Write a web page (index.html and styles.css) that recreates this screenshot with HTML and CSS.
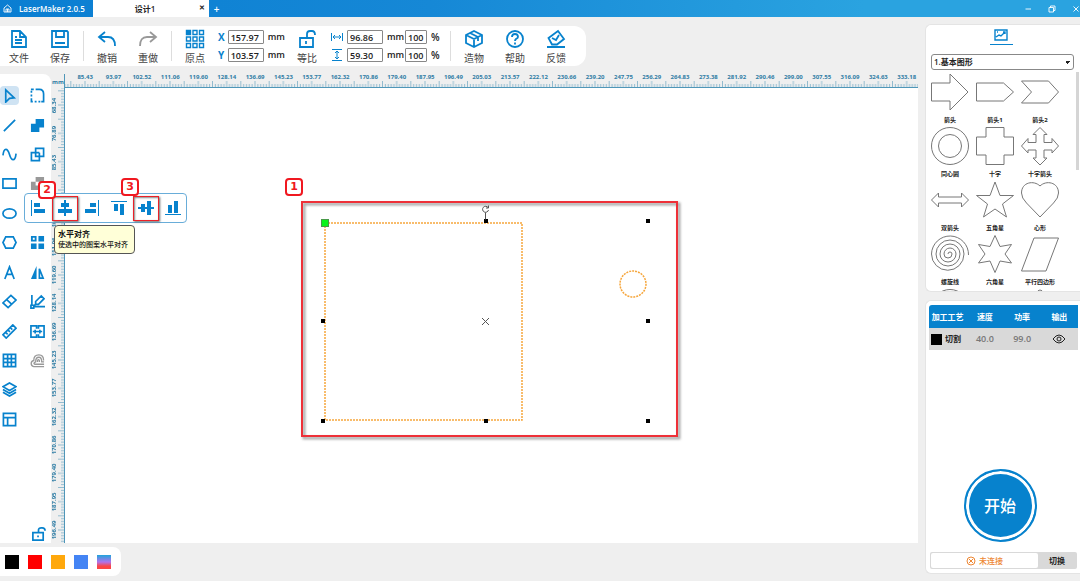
FILE: index.html
```html
<!DOCTYPE html>
<html lang="zh-CN">
<head>
<meta charset="utf-8">
<title>LaserMaker 2.0.5</title>
<link rel="stylesheet" href="styles.css">
</head>
<body>
<header class="titlebar">
  <div class="brand">
    <svg class="ic" width="9" height="9" viewBox="0 0 18 18"><path d="M2 8 9 2l7 6v8H2zM6 16v-6h6v6M9 10v6"/></svg>
    <span>LaserMaker 2.0.5</span>
  </div>
  <div class="tab"><span>设计1</span><button class="tab-close" aria-label="关闭标签">✕</button></div>
  <button class="tab-add" aria-label="新建标签">+</button>
  <div class="window-buttons">
    <button aria-label="最小化"><svg class="ic" width="8" height="8" viewBox="0 0 16 16"><path d="M3 8h11"/></svg></button>
    <button aria-label="还原"><svg class="ic" width="8" height="8" viewBox="0 0 16 16"><path d="M2 5h9v9H2zM5 5V2h9v9h-3"/></svg></button>
    <button aria-label="关闭"><svg class="ic" width="8" height="8" viewBox="0 0 16 16"><path d="m3 3 10 10M13 3 3 13"/></svg></button>
  </div>
</header>

<div class="app">
  <div class="left">
    <nav class="toolbar">
      <button class="tool"><svg class="ic" width="20" height="20" viewBox="0 0 20 20"><path d="M3 2h8l6 6v10H3zM11 2v6h6M6 11h7M6 14h7M6 8h2"/></svg><span>文件</span></button>
      <button class="tool"><svg class="ic" width="20" height="20" viewBox="0 0 20 20"><path d="M2 2h15l1 1v15H2zM6 2v6h8V2M5 14h10"/></svg><span>保存</span></button>
      <i class="sep"></i>
      <button class="tool"><svg class="ic" width="20" height="20" viewBox="0 0 20 20"><path d="M8 3 2 8l6 5M2 8h9q7 0 7 9"/></svg><span>撤销</span></button>
      <button class="tool"><svg class="ic gray" width="20" height="20" viewBox="0 0 20 20"><path d="m12 3 6 5-6 5M18 8H9q-7 0-7 9"/></svg><span>重做</span></button>
      <i class="sep"></i>
      <button class="tool"><svg class="ic fine" width="20" height="20" viewBox="0 0 20 20"><path fill="currentColor" d="M1.500 1.500h4v4h-4z"/><path d="M8 1.500h4v4H8zM14.500 1.500h4v4h-4zM1.500 8h4v4h-4zM8 8h4v4H8zM14.500 8h4v4h-4zM1.500 14.500h4v4h-4zM8 14.500h4v4H8zM14.500 14.500h4v4h-4z"/></svg><span>原点</span></button>
      <div class="fields">
        <div class="field"><label class="axis" for="px">X</label><input id="px" class="num" value="157.97"><span class="unit">mm</span></div>
        <div class="field"><label class="axis" for="py">Y</label><input id="py" class="num" value="103.57"><span class="unit">mm</span></div>
      </div>
      <button class="tool"><svg class="ic" width="20" height="20" viewBox="0 0 20 20"><path d="M3 9h13v9H3zM10 9V5q0-3 3-3h2q3 0 3 4M9 12v3"/></svg><span>等比</span></button>
      <div class="fields size">
        <div class="field"><label class="dim" for="w" aria-label="宽"><svg class="ic thin" width="12" height="12" viewBox="0 0 12 12"><path d="M.5 2v8M11.500 2v8M2 6h8M4 4 2 6l2 2M8 4l2 2-2 2"/></svg></label><input id="w" class="num" value="96.86"><span class="unit">mm</span><input class="num pct" aria-label="宽度百分比" value="100"><span class="percent">%</span></div>
        <div class="field"><label class="dim" for="h" aria-label="高"><svg class="ic thin" width="12" height="12" viewBox="0 0 12 12"><path d="M1 .5h10M1 11.500h10M6 2v8M4 4l2-2 2 2M4 8l2 2 2-2"/></svg></label><input id="h" class="num" value="59.30"><span class="unit">mm</span><input class="num pct" aria-label="高度百分比" value="100"><span class="percent">%</span></div>
      </div>
      <i class="sep"></i>
      <button class="tool"><svg class="ic" width="20" height="20" viewBox="0 0 20 20"><path d="m10 2 8 4v8l-8 4-8-4V6zM2 6l8 4 8-4M10 10v8M6 4l8 4v4"/></svg><span>造物</span></button>
      <button class="tool"><svg class="ic" width="20" height="20" viewBox="0 0 20 20"><circle cx="10" cy="10" r="8"/><path d="M7 8q0-3 3-3t3 3q0 1-2 2-1 1-1 2M10 13.500v2"/></svg><span>帮助</span></button>
      <button class="tool"><svg class="ic" width="20" height="20" viewBox="0 0 20 20"><path d="M1 18h18M6 15.500 2.500 9 12 2l6 8-7 5.500zM6 9l4 2 3-5"/></svg><span>反馈</span></button>
    </nav>

    <main class="workspace">
      <aside class="tools">
        <div class="tool-grid">
          <button class="t on" aria-label="选择"><svg class="ic" viewBox="0 0 16 16"><path d="m4 2 9 8.500-5 .5-4 4z"/></svg></button>
          <button class="t" aria-label="圆角"><svg class="ic" viewBox="0 0 16 16"><path d="M6 1.500h4q4.500 0 4.500 5v8H12M1 1.500h3M1.500 3v2M1.500 7v2M1.500 11v3.500H3M5 14.500h2M9 14.500h2"/></svg></button>
          <button class="t" aria-label="直线"><svg class="ic" viewBox="0 0 16 16"><path d="M2 14 14 2"/></svg></button>
          <button class="t" aria-label="并集"><svg class="ic solid" viewBox="0 0 16 16"><path d="M6 1h9v9h-5v5H1V6h5z"/></svg></button>
          <button class="t" aria-label="曲线"><svg class="ic" viewBox="0 0 16 16"><path d="M1 9C2 0 6 1 8 8s6 8 7-1"/></svg></button>
          <button class="t" aria-label="差集"><svg class="ic" viewBox="0 0 16 16"><path d="M6 1.500h8.500V10H6zM10 6v8.500H1.500V6H10"/></svg></button>
          <button class="t" aria-label="矩形"><svg class="ic" viewBox="0 0 16 16"><path d="M1 3h14v10H1z"/></svg></button>
          <button class="t" aria-label="交集"><svg class="ic solid gray" viewBox="0 0 16 16"><path fill-rule="evenodd" d="M6 1h9v9h-5v5H1V6h5zm0 5h4v4H6z"/></svg></button>
          <button class="t" aria-label="椭圆"><svg class="ic" viewBox="0 0 16 16"><ellipse cx="8" cy="8" rx="7" ry="5"/></svg></button>
          <button class="t" aria-label="对齐"><svg class="ic solid" viewBox="0 0 16 16"><path d="M1 1h2v14H1zM5 3h5v4H5zM5 9h9v4H5z"/></svg></button>
          <button class="t" aria-label="多边形"><svg class="ic" viewBox="0 0 16 16"><path d="M4 2h8l3 6-3 6H4L1 8z"/></svg></button>
          <button class="t" aria-label="阵列"><svg class="ic solid" viewBox="0 0 16 16"><path fill-rule="evenodd" d="M1 1h6v6H1zm2 2v2h2V3zM9 1h6v6H9zM1 9h6v6H1zM9 9h6v6H9z"/></svg></button>
          <button class="t" aria-label="文字"><svg class="ic" viewBox="0 0 16 16"><path d="M3 15 8 2l5 13M5 10h6"/></svg></button>
          <button class="t" aria-label="镜像"><svg class="ic" viewBox="0 0 16 16"><path d="M10 4v10h4z"/><path class="face" d="M7 1v14H1z"/></svg></button>
          <button class="t" aria-label="橡皮擦"><svg class="ic" viewBox="0 0 16 16"><path d="M9.500 1.500 15 6.500l-8.500 8L1 9.500zM5 6l5.500 5"/></svg></button>
          <button class="t" aria-label="编辑节点"><svg class="ic" viewBox="0 0 16 16"><path d="M2 1v11M4 13.500h12M1 12h3v3H1zM6 11V8l6-6 3 3-6 6zM4 13l3-3"/></svg></button>
          <button class="t" aria-label="测量"><svg class="ic" viewBox="0 0 16 16"><path d="m11.500 1 3.500 3.500L4.500 15 1 11.500zM9 4l2 2M6.500 6.500l2 2M4 9l2 2"/></svg></button>
          <button class="t" aria-label="拼接"><svg class="ic" viewBox="0 0 16 16"><path d="M7 5V2H1v12h6v-3M9 5V2h6v12H9v-3M3 8h10M5.500 6v4M10.500 6v4"/></svg></button>
          <button class="t" aria-label="网格"><svg class="ic" viewBox="0 0 16 16"><path d="M1.500 1.500h13v13h-13zM6 2v12M10 2v12M2 6h12M2 10h12"/></svg></button>
          <button class="t" aria-label="偏移"><svg class="ic fine gray" viewBox="0 0 16 16"><path d="M15 14.500H4A3.300 3.300 0 0 1 4 8Q4 2 9.500 2q5 0 5 6M15 12H5q-2-1 1-2.500Q6 4.500 9.500 4.500q3 0 3 5H15M8 9.500V8q1-2 2 0v1.500"/></svg></button>
          <button class="t" aria-label="图层"><svg class="ic" viewBox="0 0 16 16"><path d="m8 1 7 4-7 4-7-4zM1 8l7 4 7-4M1 11l7 4 7-4"/></svg></button>
          <span></span>
          <button class="t" aria-label="布局"><svg class="ic" viewBox="0 0 16 16"><path d="M1.500 1.500h13v13h-13zM2 6h12M6 6v8"/></svg></button>
        </div>
        <button class="t lock" aria-label="锁定"><svg class="ic" viewBox="0 0 16 16"><path d="M2 7h11v8H2zM8 7V4q0-2 3-2h1q3 0 3 3M7.500 10v2"/></svg></button>
      </aside>

      <div class="board">
        <div class="corner">mm</div>
        <div class="ruler-x">
          <svg class="ticks-x" viewBox="0 0 300 7" preserveAspectRatio="none"><defs><pattern id="tx" width="10" height="7" patternUnits="userSpaceOnUse"><path d="M1 4v3M2 4v3M3 4v3M4 4v3M6 4v3M7 4v3M8 4v3M9 4v3M5 1v6"/><path d="M0 1v6M10 1v6"/></pattern></defs><rect x="-7" width="310" height="7" fill="url(#tx)" stroke="none"/></svg>
          <span>85.43</span><span>93.97</span><span>102.52</span><span>111.06</span><span>119.60</span><span>128.14</span><span>136.69</span><span>145.23</span><span>153.77</span><span>162.32</span><span>170.86</span><span>179.40</span><span>187.95</span><span>196.49</span><span>205.03</span><span>213.57</span><span>222.12</span><span>230.66</span><span>239.20</span><span>247.75</span><span>256.29</span><span>264.83</span><span>273.38</span><span>281.92</span><span>290.46</span><span>299.00</span><span>307.55</span><span>316.09</span><span>324.63</span><span>333.18</span>
        </div>
        <div class="ruler-y">
          <svg class="ticks-y" viewBox="0 0 7 160" preserveAspectRatio="none"><defs><pattern id="ty" width="7" height="10" patternUnits="userSpaceOnUse"><path d="M4 1h3M4 2h3M4 3h3M4 4h3M4 6h3M4 7h3M4 8h3M4 9h3M1 5h6"/><path d="M1 0h6M1 10h6"/></pattern></defs><rect y="-7" width="7" height="170" fill="url(#ty)" stroke="none"/></svg>
          <span>68.34</span><span>76.89</span><span>85.43</span><span>93.97</span><span>102.52</span><span>111.06</span><span>119.60</span><span>128.14</span><span>136.69</span><span>145.23</span><span>153.77</span><span>162.32</span><span>170.86</span><span>179.40</span><span>187.95</span><span>196.49</span>
        </div>
        <div class="canvas">
          <svg class="drawing" width="853" height="455" viewBox="65 88 853 455">
            <rect class="frame-shadow" x="304" y="204" width="375" height="234"/>
            <rect class="frame" x="302" y="202" width="375" height="234"/>
            <rect class="cut" x="325" y="223" width="197" height="197"/>
            <circle class="cut" cx="633" cy="284" r="13"/>
            <path class="handle" d="M321 319h4v4h-4zM321 419h4v4h-4zM484 219h4v4h-4zM484 419h4v4h-4zM646 219h4v4h-4zM646 319h4v4h-4zM646 419h4v4h-4z"/>
            <rect class="origin" x="321.500" y="219.500" width="7" height="7"/>
            <path class="mark" d="m482 318 7 7M489 318l-7 7M485.500 212.500v7M488 207.500a3 3 0 1 0 .5 2.500M488.500 205.500v2.500h-2.500"/>
          </svg>
          <b class="badge one">1</b>
        </div>
      </div>

      <div class="align-menu">
        <button aria-label="左对齐"><svg class="ic solid" width="16" height="16" viewBox="0 0 16 16"><path d="M1 0h1v16H1zM4 3h6v4H4zM4 9h11v4H4z"/></svg></button>
        <button class="picked" aria-label="水平对齐"><svg class="ic solid" width="16" height="16" viewBox="0 0 16 16"><path d="M7 0h2v16H7zM4 3h8v4H4zM1 9h14v4H1z"/></svg><b class="badge two">2</b></button>
        <button aria-label="右对齐"><svg class="ic solid" width="16" height="16" viewBox="0 0 16 16"><path d="M14 0h1v16h-1zM6 3h6v4H6zM1 9h11v4H1z"/></svg></button>
        <button aria-label="顶对齐"><svg class="ic solid" width="16" height="16" viewBox="0 0 16 16"><path d="M0 1h16v1H0zM3 4h4v7H3zM9 4h4v11H9z"/></svg></button>
        <button class="picked" aria-label="垂直对齐"><svg class="ic solid" width="16" height="16" viewBox="0 0 16 16"><path d="M0 7h16v2H0zM3 4h4v8H3zM9 1h4v14H9z"/></svg><b class="badge three">3</b></button>
        <button aria-label="底对齐"><svg class="ic solid" width="16" height="16" viewBox="0 0 16 16"><path d="M0 14h16v1H0zM3 5h4v8H3zM9 1h4v12H9z"/></svg></button>
      </div>
      <div class="tooltip" role="tooltip"><b>水平对齐</b><span>使选中的图案水平对齐</span></div>
    </main>

    <footer class="palette">
      <button class="sw black" aria-label="黑色"></button>
      <button class="sw red" aria-label="红色"></button>
      <button class="sw orange" aria-label="橙色"></button>
      <button class="sw blue" aria-label="蓝色"></button>
      <button class="sw mix" aria-label="渐变"></button>
    </footer>
  </div>

  <div class="right">
    <section class="panel library">
      <button class="lib-tab" aria-label="图库"><svg class="ic fine" width="14" height="12" viewBox="0 0 14 12"><path d="M1 1h12v10H1zM2 8l3-2 2 1 4-4M9 3h2v2M3 3h1"/></svg></button>
      <select class="lib-select" aria-label="图形分类"><option>1.基本图形</option></select>
      <div class="shapes">
        <figure><svg viewBox="0 0 38 38"><path d="M.5 10H19V1l18 18-18 18v-9H.5z"/></svg><figcaption>箭头</figcaption></figure>
        <figure><svg viewBox="0 0 38 38"><path d="M.5 10h27l10 9-10 9H.5z"/></svg><figcaption>箭头1</figcaption></figure>
        <figure><svg viewBox="0 0 38 38"><path d="M.5 8h27l10 11-10 11H.5l10-11z"/></svg><figcaption>箭头2</figcaption></figure>
        <figure><svg viewBox="0 0 38 38"><circle cx="19" cy="19" r="18.5"/><circle cx="19" cy="19" r="11.500"/></svg><figcaption>同心圆</figcaption></figure>
        <figure><svg viewBox="0 0 38 38"><path d="M10 .5h18V10h9.500v18H28v9.500H10V28H.5V10H10z"/></svg><figcaption>十字</figcaption></figure>
        <figure><svg viewBox="0 0 38 38"><path d="m19 .5 7 7h-3v8h8v-4l6.500 7.500-6.500 7v-3h-8v8h3l-7 7-7-7h3v-8H7v3l-6.500-7L7 11.500v4h8v-8h-3z"/></svg><figcaption>十字箭头</figcaption></figure>
        <figure><svg viewBox="0 0 38 38"><path d="m.5 19 7-7v4h23v-4l7 7-7 7v-4h-23v4z"/></svg><figcaption>双箭头</figcaption></figure>
        <figure><svg viewBox="0 0 38 38"><path d="m19 1 5 13.500h13.500l-11 8.500 4 13L19 28 7.500 36l4-13L.5 14.500H14z"/></svg><figcaption>五角星</figcaption></figure>
        <figure><svg viewBox="0 0 38 38"><path d="M19 5C13-1 .5 1 .5 12q0 5 5 10L19 36l13.500-14q5-5 5-10C37.500 1 25-1 19 5z"/></svg><figcaption>心形</figcaption></figure>
        <figure><svg viewBox="0 0 38 38"><path d="M37.500 20A18.500 18.500 0 0 0 .5 19A16.200 16.200 0 0 0 33 19A14 14 0 0 0 5 19A12 12 0 0 0 29 19A10 10 0 0 0 9 19A8 8 0 0 0 25 19A6 6 0 0 0 13 19A4 4 0 0 0 21 19A2 2 0 0 0 17 19"/></svg><figcaption>螺旋线</figcaption></figure>
        <figure><svg viewBox="0 0 38 38"><path d="m19 .5 5 11 11.500-2-6.500 9.500 6.500 9-11.500-2-5 11.500-5-11.500-11.500 2 6.500-9-6.500-9.500 11.500 2z"/></svg><figcaption>六角星</figcaption></figure>
        <figure><svg viewBox="0 0 38 38"><path d="M13 3h24.500L25 36H.5z"/></svg><figcaption>平行四边形</figcaption></figure>
        <figure><svg viewBox="0 0 38 38"><circle cx="19" cy="19" r="18.500"/></svg></figure>
        <figure></figure>
        <figure><svg viewBox="0 0 38 38"><path d="M15 4q4-6 8 0v33h-8z"/></svg></figure>
      </div>
    </section>

    <section class="panel process">
      <table>
        <thead><tr><th>加工工艺</th><th>速度</th><th>功率</th><th>输出</th></tr></thead>
        <tbody><tr><td><div class="craft"><i></i>切割</div></td><td>40.0</td><td>99.0</td><td><svg class="ic eye" width="14" height="10" viewBox="0 0 14 10"><path d="M1 5q6-8 12 0-6 8-12 0z"/><circle cx="7" cy="5" r="2"/></svg></td></tr></tbody>
      </table>
      <button class="start">开始</button>
      <div class="link-bar">
        <div class="link-state"><svg class="ic" width="10" height="10" viewBox="0 0 10 10"><circle cx="5" cy="5" r="4"/><path d="m3 3 4 4M7 3 3 7"/></svg><span>未连接</span></div>
        <button class="switch">切换</button>
      </div>
    </section>
  </div>
</div>
</body>
</html>
```

FILE: styles.css
```css
* { box-sizing: border-box; }
body {
  margin: 0;
  height: 100vh;
  display: flex;
  flex-direction: column;
  overflow: hidden;
  background: #efefef;
  color: #222;
  font: 9px/12px "Open Sans", "Noto Sans CJK SC", sans-serif;
}
button { border: 0; padding: 0; margin: 0; background: none; font: inherit; color: inherit; }
.ic { display: block; flex: none; fill: none; stroke: currentColor; stroke-width: 1.8; color: #0782cd; }
.ic.thin { stroke-width: 1; }
.ic.fine { stroke-width: 1.4; }
.ic.gray { color: #999; }
.ic.solid { fill: currentColor; stroke: none; }
.face { fill: currentColor; stroke: none; }

/* title bar */
.titlebar {
  flex: none;
  height: 17px;
  display: flex;
  background: linear-gradient(90deg, #0a7ed2, #1688d6 40%, #2aa3e0 80%);
  color: #fff;
}
.titlebar .ic { color: inherit; }
.brand { width: 93px; display: flex; align-items: center; gap: 7px; padding-left: 3px; font-weight: 600; font-size: 8px; white-space: nowrap; }
.tab { position: relative; width: 116px; display: flex; align-items: center; justify-content: center; padding-right: 12px; background: #fff; color: #222; font-size: 8px; font-weight: 600; }
.tab-close { position: absolute; right: 4px; top: 2px; font-size: 7px; }
.tab-add { width: 15px; font-size: 10px; font-weight: 600; }
.window-buttons { margin-left: auto; display: flex; align-items: center; gap: 16px; }

.app { flex: 1; min-height: 0; display: flex; gap: 7px; }
.left { flex: 1; min-width: 0; display: flex; flex-direction: column; align-items: flex-start; padding: 9px 0 5px; }

/* toolbar */
.toolbar { display: flex; align-items: center; gap: 3px; height: 40px; padding-right: 11px; background: #fff; border-radius: 0 12px 12px 0; }
.tool { width: 38px; display: flex; flex-direction: column; align-items: center; gap: 2px; padding-top: 3px; font-size: 10px; line-height: 15px; color: #444; }
.sep { width: 1px; height: 30px; margin: 0 1px; background: #ddd; }
.fields { width: 68px; display: flex; flex-direction: column; gap: 4px; }
.fields.size { width: 117px; padding-left: 2px; }
.field { display: flex; align-items: center; font-weight: 600; white-space: nowrap; }
.axis { width: 11px; padding-left: 1px; color: #0782cd; font-size: 10px; font-weight: 700; }
.dim { width: 16px; }
.num { width: 36px; height: 14px; padding: 0 2px; border: 1px solid #888; border-radius: 1px; background: #fff; color: #222; font: 600 9px/12px "Open Sans", sans-serif; }
.pct { width: 22px; }
.unit { width: 22px; padding-left: 4px; }
.percent { padding-left: 4px; font-size: 10px; }

/* workspace */
.workspace { position: relative; flex: 1; min-height: 0; align-self: stretch; display: flex; margin: 8px 0 4px; }
.tools { width: 51px; flex: none; display: flex; flex-direction: column; justify-content: space-between; padding-top: 7px; background: #fff; border-radius: 0 8px 0 0; }
.tool-grid { height: 353px; display: grid; grid-template-columns: 19px 19px; grid-template-rows: repeat(12, 1fr); column-gap: 9px; align-items: center; }
.t { width: 19px; height: 19px; display: grid; place-items: center; border-radius: 4px; }
.t .ic { width: 15px; height: 15px; }
.t.on { background: #cfe3f3; }
.lock { margin-left: 29px; }
.board { flex: 1; min-width: 0; display: grid; grid-template: 14px 1fr / 14px 1fr; overflow: hidden; color: #2f7da5; font-size: 6px; line-height: 7px; font-weight: 700; }
.corner { border-right: 1px solid #4f96b8; padding: 5px 0 0 1px; }
.ruler-x { position: relative; display: flex; overflow: hidden; min-width: 0; border-bottom: 1px solid #4f96b8; padding-left: 6px; }
.ruler-x span { flex: 0 0 calc(850px / 30); text-align: center; }
.ticks-x, .ticks-y { position: absolute; overflow: visible; stroke: #4f96b8; stroke-width: .3; }
.ticks-x { left: 20px; bottom: 0; width: 850px; height: 7px; }
.ticks-y { right: 0; top: 17px; width: 7px; height: calc(850px / 30 * 16); }
.ruler-y { position: relative; display: flex; flex-direction: column; overflow: hidden; min-height: 0; border-right: 1px solid #4f96b8; padding-top: 3px; }
.ruler-y span { flex: 0 0 calc(850px / 30); width: 8px; writing-mode: vertical-rl; transform: rotate(180deg); text-align: center; }
.canvas { position: relative; background: #fff; overflow: hidden; min-height: 0; }
.drawing { position: absolute; left: 0; top: 0; fill: none; }
.frame { stroke: #ee3038; stroke-width: 2; }
.frame-shadow { stroke: #777; stroke-width: 3; opacity: .6; filter: blur(1px); }
.cut { stroke: #f6a63c; stroke-width: 1.5; stroke-dasharray: 2 1; }
.handle { fill: #000; }
.origin { fill: #0bf51b; stroke: #4a9a4a; }
.mark { stroke: #555; }

.badge { position: absolute; width: 18px; height: 18px; border: 2px solid #f01820; border-radius: 4px; background: #fff; color: #f01820; font: 700 11px/14px "DejaVu Sans", sans-serif; text-align: center; }
.one { left: 220px; top: 90px; }
.two { left: -15px; top: -16px; }
.three { left: -13px; top: -19px; }

.align-menu { position: absolute; left: 24px; top: 119px; height: 30px; display: flex; align-items: center; gap: 1px; border: 1px solid #69add9; border-radius: 4px; background: #fff; }
.align-menu button { position: relative; width: 26px; height: 25px; display: grid; place-items: center; }
.align-menu .picked { border: 1px solid #ec2028; box-shadow: 1px 1px 2px #666, inset 1px 1px 2px #888; }
.tooltip { position: absolute; left: 54px; top: 151px; display: flex; flex-direction: column; padding: 2px 6px 3px 3px; border: 1px solid #555; border-radius: 4px; background: #ffffd8; color: #111; font-size: 7px; line-height: 11px; font-weight: 500; white-space: nowrap; }
.tooltip b { font-size: 8px; }

.palette { flex: none; display: flex; align-items: center; gap: 9px; height: 29px; padding: 0 10px 0 5px; background: #fff; border-radius: 0 8px 8px 0; }
.sw { width: 14px; height: 14px; }
.black { background: #000; }
.red { background: #f00; }
.orange { background: #ffa80c; }
.blue { background: #4484f4; }
.mix { background: linear-gradient(#20a5dc, #b072ec 50%, #fb4545 80%); }

/* right side */
.right { width: 155px; flex: none; display: flex; flex-direction: column; gap: 8px; padding: 7px 0; }
.panel { background: #fff; border: 1px solid #e4e4e4; border-right: 0; border-radius: 6px 0 0 6px; }
.library { height: 268px; flex: none; display: flex; flex-direction: column; overflow: hidden; }
.lib-tab { align-self: center; width: 23px; height: 16px; margin: 4px 4px 9px 0; display: grid; justify-items: center; border-bottom: 1px solid #0782cd; }
.lib-select {
  flex: none;
  height: 16px;
  margin: 0 6px 2px 5px;
  padding: 0 2px;
  border: 1px solid #888;
  border-radius: 3px;
  appearance: none;
  background: conic-gradient(from -45deg at 50% 100%, #222 90deg, transparent 0) no-repeat right 3px center / 4px 3px #fff;
  color: #222;
  font: 600 8px/12px "Open Sans", "Noto Sans CJK SC", sans-serif;
}
.shapes { flex: 1; min-height: 0; display: grid; grid-template-columns: repeat(3, 38px); grid-auto-rows: 54px; column-gap: 7px; margin-right: 1px; padding-left: 5px; overflow: hidden; background: linear-gradient(#d5d5d5, #d5d5d5) no-repeat right 0 top 0 / 3px 98px; }
.shapes figure { margin: 0; display: flex; flex-direction: column; align-items: center; gap: 3px; padding-top: 1px; }
.shapes svg { width: 38px; height: 38px; fill: none; stroke: #777; stroke-width: 1; overflow: visible; }
.shapes figcaption { font-size: 6px; line-height: 12px; font-weight: 700; color: #222; white-space: nowrap; }

.process { flex: 1; min-height: 0; display: flex; flex-direction: column; align-items: center; padding: 4px 2px 4px 3px; }
.process table { width: 100%; border-collapse: collapse; table-layout: fixed; text-align: center; font-weight: 600; }
.process th { height: 23px; padding: 0; background: #0782cd; color: #fff; font-size: 8px; font-weight: 600; white-space: nowrap; }
.process th:first-child { border-radius: 3px 0 0 0; }
.process td { height: 22px; padding: 0; background: #d9d9d9; color: #777; }
.craft { display: flex; align-items: center; gap: 3px; padding-left: 2px; color: #222; font-size: 8px; font-weight: 700; }
.craft i { width: 11px; height: 11px; background: #000; }
.eye { margin: 0 auto; color: #222; stroke-width: 1; }
.start { width: 73px; height: 73px; margin: auto 7px 10px 0; border: 2px solid #0782cd; border-radius: 50%; background: #0782cd; box-shadow: inset 0 0 0 3px #fff; color: #fff; font-size: 16px; font-weight: 500; }
.link-bar { align-self: stretch; display: flex; height: 17px; margin: 0 1px; padding: 1px; background: #d9d9d9; border-radius: 2px; }
.link-state { flex: 1; display: flex; align-items: center; justify-content: center; gap: 3px; border-radius: 2px; background: #fff; color: #ee8733; font-size: 8px; font-weight: 500; }
.link-state .ic { stroke-width: 1; color: inherit; }
.switch { width: 38px; font-size: 8px; font-weight: 700; color: #222; }
```
